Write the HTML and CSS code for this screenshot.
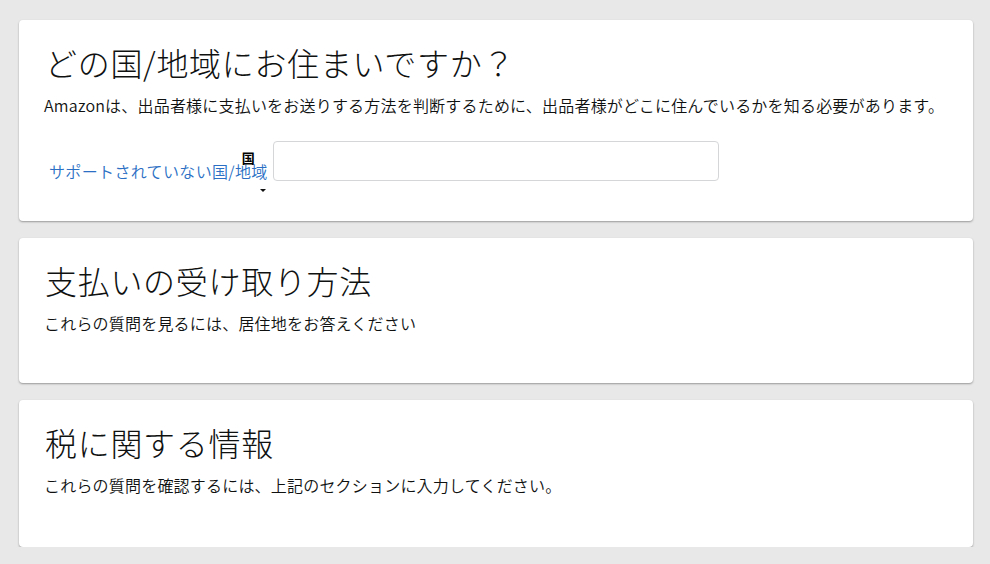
FILE: index.html
```html
<!DOCTYPE html>
<html lang="ja">
<head>
<meta charset="utf-8">
<title>居住国</title>
<link rel="stylesheet" href="styles.css">
</head>
<body>
<main class="page">
  <section class="card card-country">
    <h1 class="card-title">どの国/地域にお住まいですか？</h1>
    <p class="card-text">Amazonは、出品者様に支払いをお送りする方法を判断するために、出品者様がどこに住んでいるかを知る必要があります。</p>
    <div class="country-row">
      <div class="picker">
        <a class="picker-link" href="#">サポートされていない国/地域</a>
        <span class="picker-label">国</span>
        <span class="picker-caret"></span>
      </div>
      <input class="country-input" type="text" aria-label="国">
    </div>
  </section>
  <section class="card card-short">
    <h2 class="card-title">支払いの受け取り方法</h2>
    <p class="card-text">これらの質問を見るには、居住地をお答えください</p>
  </section>
  <section class="card card-short card-tax">
    <h2 class="card-title">税に関する情報</h2>
    <p class="card-text">これらの質問を確認するには、上記のセクションに入力してください。</p>
  </section>
</main>
</body>
</html>
```
FILE: styles.css
```css
* { box-sizing: border-box; }
html, body { margin: 0; padding: 0; }
body {
  background: #e8e8e8;
  font-family: "Noto Sans CJK JP", "Noto Sans", sans-serif;
  color: #0f1111;
}
.page {
  width: 954px;
  margin-left: 19px;
  padding-top: 20px;
  display: flex;
  flex-direction: column;
  gap: 17px;
}
.card {
  background: #fff;
  border-radius: 4px;
  box-shadow: 0 1px 2px rgba(0,0,0,0.35);
  padding: 22px 16px 0 26px;
}
.card-title {
  margin: 0;
  font-size: 32px;
  line-height: 40px;
  font-weight: 300;
  letter-spacing: 0.7px;
}
.card-text {
  margin: 11px 0 0 -1px;
  font-size: 16px;
  line-height: 24px;
  font-weight: 350;
  letter-spacing: 0.2px;
  white-space: nowrap;
}
.card-country { height: 201px; }
.card-short { height: 145px; }
.card-tax { height: 147px; }
.country-row {
  display: flex;
  align-items: flex-start;
  margin-top: 24px;
}
.picker {
  position: relative;
  padding: 18px 0 0 4px;
  margin-right: 5px;
}
.picker-link {
  font-size: 16px;
  line-height: 24px;
  font-weight: 350;
  color: #2a6fc4;
  text-decoration: none;
  white-space: nowrap;
  letter-spacing: 0.35px;
}
.picker-label {
  position: absolute;
  top: 9px;
  right: 13px;
  font-size: 13px;
  line-height: 16px;
  font-weight: 700;
  color: #000;
}
.picker-caret {
  position: absolute;
  top: 48px;
  right: 2px;
  width: 0;
  height: 0;
  border-left: 3px solid transparent;
  border-right: 3px solid transparent;
  border-top: 3px solid #111;
}
.country-input {
  width: 446px;
  height: 40px;
  border: 1px solid #d5d6d8;
  border-radius: 4px;
  background: #fff;
  margin: 0;
  padding: 0 8px;
  font: inherit;
}
```
